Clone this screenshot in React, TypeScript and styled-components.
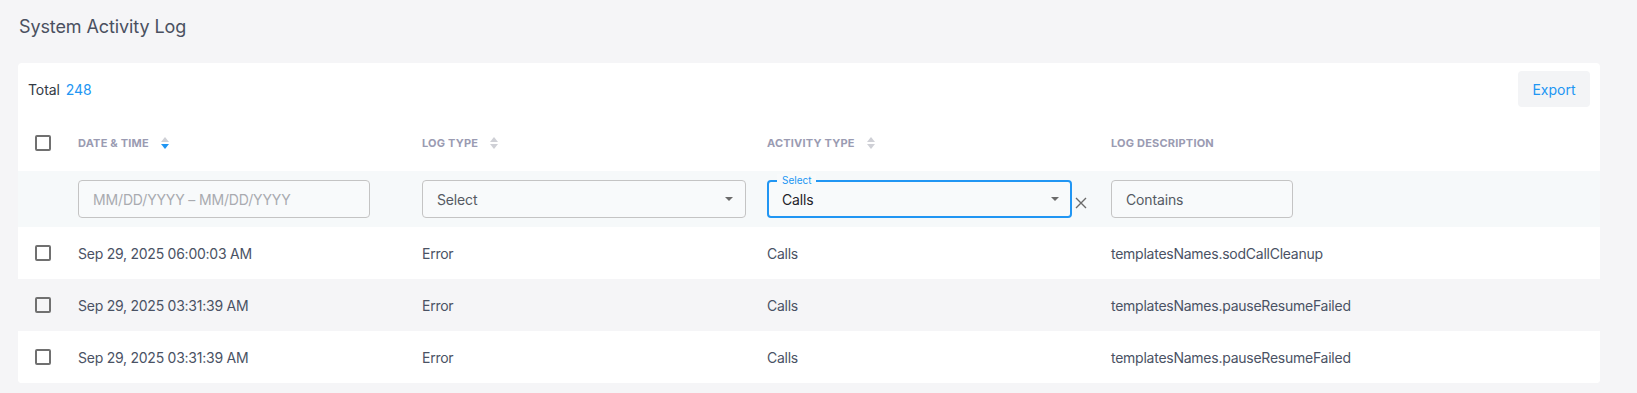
import React from 'react';
import styled, { createGlobalStyle } from 'styled-components';

const GlobalStyle = createGlobalStyle`
  body {
    margin: 0;
    background: #f5f5f7;
    font-family: Inter, "Liberation Sans", Arial, sans-serif;
  }
`;

const Page = styled.div`
  padding: 15px 37px 0 18px;
`;

const PageTitle = styled.h1`
  margin: 0 0 24px 1px;
  font-size: 18px;
  line-height: 24px;
  font-weight: 400;
  letter-spacing: -0.1px;
  color: #4a5060;
`;

const Card = styled.div`
  background: #ffffff;
  border-radius: 4px;
  overflow: hidden;
`;

const Toolbar = styled.div`
  height: 52px;
  padding: 0 10px;
  display: flex;
  align-items: center;
  justify-content: space-between;
`;

const TotalText = styled.div`
  font-size: 14px;
  color: #333a45;
  display: flex;
  gap: 6px;
  letter-spacing: -0.1px;
`;

const TotalCount = styled.span`
  color: #2196f3;
`;

const ExportButton = styled.button`
  width: 72px;
  height: 36px;
  border: none;
  border-radius: 4px;
  background: #f3f4f6;
  color: #2196f3;
  font-family: inherit;
  font-size: 14px;
  cursor: pointer;
`;

const Row = styled.div<{ $height: number; $bg: string }>`
  display: grid;
  grid-template-columns: 60px 344px 345px 344px 1fr;
  align-items: center;
  height: ${(p) => p.$height}px;
  background: ${(p) => p.$bg};
`;

const CheckCell = styled.div`
  padding-left: 17px;
  display: flex;
  align-items: center;
`;

const Checkbox = styled.span`
  width: 16px;
  height: 16px;
  box-sizing: border-box;
  border: 2px solid #707070;
  border-radius: 2px;
  display: inline-block;
`;

const HeadCell = styled.div`
  display: flex;
  align-items: center;
  gap: 12px;
  font-size: 11px;
  font-weight: 700;
  letter-spacing: 0.2px;
  color: #9a9bb2;
  text-transform: uppercase;
`;

const Cell = styled.div`
  font-size: 14px;
  letter-spacing: -0.25px;
  color: #4a5264;
  display: flex;
  align-items: center;
`;

const FieldBox = styled.div<{ $width: number; $active?: boolean }>`
  position: relative;
  width: ${(p) => p.$width}px;
  height: 38px;
  box-sizing: border-box;
  border: ${(p) => (p.$active ? '2px solid #2196f3' : '1px solid #c4c4c4')};
  border-radius: 4px;
  background: #f8fafb;
  display: flex;
  align-items: center;
  justify-content: space-between;
  padding: 0 ${(p) => (p.$active ? 13 : 14)}px;
  font-size: 14px;
  letter-spacing: -0.15px;
  color: ${(p) => (p.$active ? '#1f2329' : '#555a63')};
`;

const Placeholder = styled.span`
  color: #a9abb0;
`;

const FloatLabel = styled.span`
  position: absolute;
  top: -8px;
  left: 8px;
  padding: 0 5px;
  background: #f8fafb;
  font-size: 10px;
  line-height: 12px;
  letter-spacing: 0;
  color: #2196f3;
`;

const Caret = styled.span`
  width: 0;
  height: 0;
  border-left: 4px solid transparent;
  border-right: 4px solid transparent;
  border-top: 4px solid #6b6b6b;
  margin-right: -2px;
`;

const ClearButton = styled.span`
  display: flex;
  margin-left: 3px;
  margin-top: 8px;
`;

const SortIcon = ({ active }: { active?: boolean }) => (
  <svg width="8" height="12" viewBox="0 0 8 12">
    <path d="M4 0 L8 5 L0 5 Z" fill="#cfd0d6" />
    <path d="M0 7 L8 7 L4 12 Z" fill={active ? '#2196f3' : '#cfd0d6'} />
  </svg>
);

const ClearIcon = () => (
  <svg width="12" height="12" viewBox="0 0 12 12">
    <path d="M1 1 L11 11 M11 1 L1 11" stroke="#6b6b6b" strokeWidth="1.4" />
  </svg>
);

const logs = [
  { date: 'Sep 29, 2025 06:00:03 AM', type: 'Error', activity: 'Calls', desc: 'templatesNames.sodCallCleanup' },
  { date: 'Sep 29, 2025 03:31:39 AM', type: 'Error', activity: 'Calls', desc: 'templatesNames.pauseResumeFailed' },
  { date: 'Sep 29, 2025 03:31:39 AM', type: 'Error', activity: 'Calls', desc: 'templatesNames.pauseResumeFailed' },
];

export default function App() {
  return (
    <>
      <GlobalStyle />
      <Page>
        <PageTitle>System Activity Log</PageTitle>
        <Card>
          <Toolbar>
            <TotalText>
              Total <TotalCount>248</TotalCount>
            </TotalText>
            <ExportButton>Export</ExportButton>
          </Toolbar>

          {/* column headers */}
          <Row $height={56} $bg="#ffffff">
            <CheckCell>
              <Checkbox />
            </CheckCell>
            <HeadCell>
              Date &amp; Time <SortIcon active />
            </HeadCell>
            <HeadCell>
              Log Type <SortIcon />
            </HeadCell>
            <HeadCell>
              Activity Type <SortIcon />
            </HeadCell>
            <HeadCell>Log Description</HeadCell>
          </Row>

          {/* filters */}
          <Row $height={56} $bg="#f6f9fa">
            <div />
            <Cell>
              <FieldBox $width={292}>
                <Placeholder>MM/DD/YYYY – MM/DD/YYYY</Placeholder>
              </FieldBox>
            </Cell>
            <Cell>
              <FieldBox $width={324}>
                Select
                <Caret />
              </FieldBox>
            </Cell>
            <Cell>
              <FieldBox $width={305} $active>
                <FloatLabel>Select</FloatLabel>
                Calls
                <Caret />
              </FieldBox>
              <ClearButton>
                <ClearIcon />
              </ClearButton>
            </Cell>
            <Cell>
              <FieldBox $width={182}>Contains</FieldBox>
            </Cell>
          </Row>

          {logs.map((log, i) => (
            <Row key={i} $height={52} $bg={i % 2 === 1 ? '#f5f5f7' : '#ffffff'}>
              <CheckCell>
                <Checkbox />
              </CheckCell>
              <Cell>{log.date}</Cell>
              <Cell>{log.type}</Cell>
              <Cell>{log.activity}</Cell>
              <Cell>{log.desc}</Cell>
            </Row>
          ))}
        </Card>
      </Page>
    </>
  );
}
